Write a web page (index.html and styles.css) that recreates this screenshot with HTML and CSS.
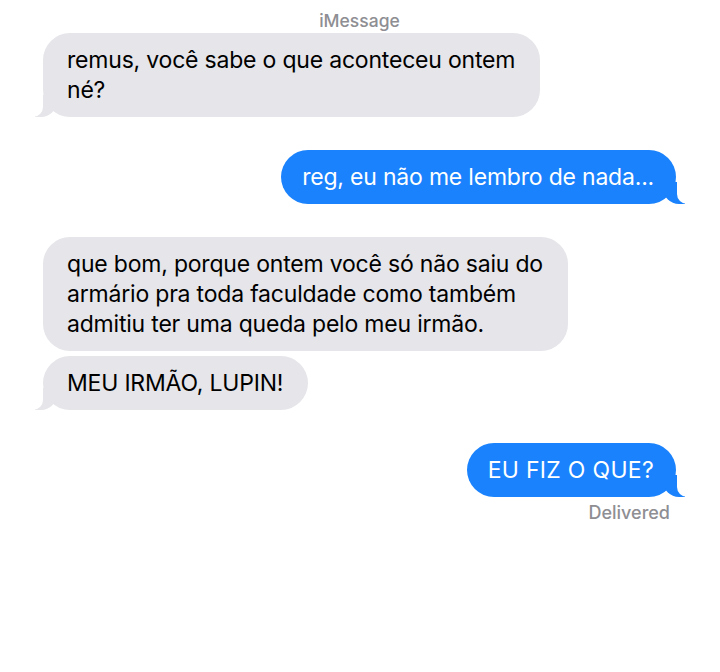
FILE: index.html
```html
<!DOCTYPE html>
<html lang="pt">
<head>
    <meta charset="UTF-8">
    <title>iMessage</title>
    <link rel="stylesheet" href="styles.css">
</head>
<body>

    <div class="chat">
        <div class="service">iMessage</div>

        <div class="group">
            <div class="bubble them">remus, você sabe o que aconteceu ontem<br>né?</div>
        </div>

        <div class="group">
            <div class="bubble me">reg, eu não me lembro de nada...</div>
        </div>

        <div class="group">
            <div class="bubble them no-tail">que bom, porque ontem você só não saiu do<br>armário pra toda faculdade como também<br>admitiu ter uma queda pelo meu irmão.</div>
            <div class="bubble them">MEU IRMÃO, LUPIN!</div>
        </div>

        <div class="group">
            <div class="bubble me caps">EU FIZ O QUE?</div>
            <div class="status">Delivered</div>
        </div>
    </div>

</body>
</html>
```

FILE: styles.css
```css
body {
    margin: 0;
    padding: 0;
    background-color: #ffffff;
    font-family: Inter, 'Noto Sans', sans-serif;
}

.chat {
    display: flex;
    flex-direction: column;
    gap: 33px;
    padding: 10px 44px 0 43px;
}

.service {
    text-align: center;
    font-size: 17.5px;
    font-weight: 500;
    line-height: 22px;
    color: #8e8e93;
    margin-bottom: -32px; /* label sits just above first bubble */
}

.group {
    display: flex;
    flex-direction: column;
    gap: 5px;
}

.bubble {
    position: relative;
    z-index: 0;
    isolation: isolate;
    font-size: 23px;
    letter-spacing: -0.2px;
    line-height: 30px;
    padding: 12px 25px 12px 24px;
    border-radius: 27px;
    white-space: nowrap;
}

.them {
    align-self: flex-start;
    background-color: #e5e5ea;
    color: #000000;
}

.me {
    align-self: flex-end;
    background-color: #1a82fc;
    color: #ffffff;
    padding: 12px 22px 12px 21px;
}

.caps {
    letter-spacing: 0.3px;
}

/* colas das bolhas */
.them::before,
.me::before {
    content: "";
    position: absolute;
    bottom: 0;
    height: 22px;
    width: 22px;
    z-index: -1;
}

.them::before {
    left: -8px;
    background-color: #e5e5ea;
    border-bottom-right-radius: 16px;
}

.me::before {
    right: -9px;
    background-color: #1a82fc;
    border-bottom-left-radius: 16px;
}

.them::after,
.me::after {
    content: "";
    position: absolute;
    bottom: 0;
    width: 11px;
    height: 23px;
    background-color: #ffffff;
    z-index: -1;
}

.them::after {
    left: -11px;
    border-bottom-right-radius: 10px;
}

.me::after {
    right: -12px;
    border-bottom-left-radius: 10px;
}

.no-tail::before,
.no-tail::after {
    display: none;
}

.status {
    align-self: flex-end;
    font-size: 18px;
    font-weight: 500;
    line-height: 22px;
    color: #8e8e93;
    margin-right: 6px;
}
```
